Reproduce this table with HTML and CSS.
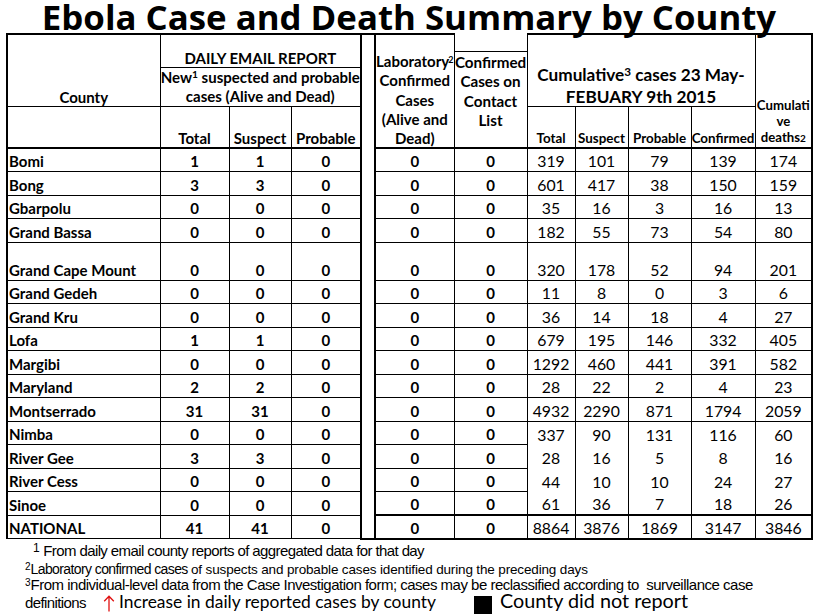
FILE: index.html
```html
<!DOCTYPE html>
<html>
<head>
<meta charset="utf-8">
<title>Ebola Case and Death Summary by County</title>
<link rel="stylesheet" href="styles.css">
</head>
<body>
<h1 class="title">Ebola Case and Death Summary by County</h1>
<table class="summary">
  <colgroup>
    <col class="w-county"><col class="w-total"><col class="w-suspect"><col class="w-probable">
    <col class="w-gap"><col class="w-lab"><col class="w-contact">
    <col class="w-ctotal"><col class="w-csusp"><col class="w-cprob"><col class="w-cconf"><col class="w-deaths">
  </colgroup>
  <tbody>
    <tr class="hrow1">
      <td class="hd county-h first" rowspan="2">County</td>
      <td class="hd daily" colspan="3">DAILY EMAIL REPORT</td>
      <td class="gap" rowspan="19"></td>
      <td class="hd lab" rowspan="3"><div class="lab-in">Laboratory<sup>2</sup><br>Confirmed<br>Cases<br>(Alive and<br>Dead)</div></td>
      <td class="hd contact" rowspan="3"><div class="contact-in">Confirmed<br>Cases on<br>Contact<br>List</div></td>
      <td class="hd cum" colspan="4" rowspan="2"><div class="cum-in">Cumulative<sup>3</sup> cases 23 May-<br>FEBUARY 9th 2015</div></td>
      <td class="hd deaths last" rowspan="3">Cumulati<br>ve<br>deaths<span class="small-sup">2</span></td>
    </tr>
    <tr class="hrow2">
      <td class="hd new" colspan="3">New<sup>1</sup> suspected and probable<br>cases (Alive and Dead)</td>
    </tr>
    <tr class="hrow3">
      <td class="hd first"></td>
      <td class="hd sub">Total</td>
      <td class="hd sub">Suspect</td>
      <td class="hd sub">Probable</td>
      <td class="hd csub">Total</td>
      <td class="hd csub">Suspect</td>
      <td class="hd csub">Probable</td>
      <td class="hd csub">Confirmed</td>
    </tr>
    <tr class="row"><td class="name first">Bomi</td><td class="n">1</td><td class="n">1</td><td class="n">0</td><td class="n lab-c">0</td><td class="n">0</td><td class="c">319</td><td class="c">101</td><td class="c">79</td><td class="c">139</td><td class="c last">174</td></tr>
    <tr class="row"><td class="name first">Bong</td><td class="n">3</td><td class="n">3</td><td class="n">0</td><td class="n lab-c">0</td><td class="n">0</td><td class="c">601</td><td class="c">417</td><td class="c">38</td><td class="c">150</td><td class="c last">159</td></tr>
    <tr class="row"><td class="name first">Gbarpolu</td><td class="n">0</td><td class="n">0</td><td class="n">0</td><td class="n lab-c">0</td><td class="n">0</td><td class="c">35</td><td class="c">16</td><td class="c">3</td><td class="c">16</td><td class="c last">13</td></tr>
    <tr class="row"><td class="name first">Grand Bassa</td><td class="n">0</td><td class="n">0</td><td class="n">0</td><td class="n lab-c">0</td><td class="n">0</td><td class="c">182</td><td class="c">55</td><td class="c">73</td><td class="c">54</td><td class="c last">80</td></tr>
    <tr class="row tall"><td class="name first">Grand Cape Mount</td><td class="n">0</td><td class="n">0</td><td class="n">0</td><td class="n lab-c">0</td><td class="n">0</td><td class="c">320</td><td class="c">178</td><td class="c">52</td><td class="c">94</td><td class="c last">201</td></tr>
    <tr class="row"><td class="name first">Grand Gedeh</td><td class="n">0</td><td class="n">0</td><td class="n">0</td><td class="n lab-c">0</td><td class="n">0</td><td class="c">11</td><td class="c">8</td><td class="c">0</td><td class="c">3</td><td class="c last">6</td></tr>
    <tr class="row"><td class="name first">Grand Kru</td><td class="n">0</td><td class="n">0</td><td class="n">0</td><td class="n lab-c">0</td><td class="n">0</td><td class="c">36</td><td class="c">14</td><td class="c">18</td><td class="c">4</td><td class="c last">27</td></tr>
    <tr class="row"><td class="name first">Lofa</td><td class="n">1</td><td class="n">1</td><td class="n">0</td><td class="n lab-c">0</td><td class="n">0</td><td class="c">679</td><td class="c">195</td><td class="c">146</td><td class="c">332</td><td class="c last">405</td></tr>
    <tr class="row"><td class="name first">Margibi</td><td class="n">0</td><td class="n">0</td><td class="n">0</td><td class="n lab-c">0</td><td class="n">0</td><td class="c">1292</td><td class="c">460</td><td class="c">441</td><td class="c">391</td><td class="c last">582</td></tr>
    <tr class="row"><td class="name first">Maryland</td><td class="n">2</td><td class="n">2</td><td class="n">0</td><td class="n lab-c">0</td><td class="n">0</td><td class="c">28</td><td class="c">22</td><td class="c">2</td><td class="c">4</td><td class="c last">23</td></tr>
    <tr class="row"><td class="name first">Montserrado</td><td class="n">31</td><td class="n">31</td><td class="n">0</td><td class="n lab-c">0</td><td class="n">0</td><td class="c">4932</td><td class="c">2290</td><td class="c">871</td><td class="c">1794</td><td class="c last">2059</td></tr>
    <tr class="row open-bottom"><td class="name first">Nimba</td><td class="n">0</td><td class="n">0</td><td class="n">0</td><td class="n lab-c">0</td><td class="n">0</td><td class="c">337</td><td class="c">90</td><td class="c">131</td><td class="c">116</td><td class="c last">60</td></tr>
    <tr class="row open-top open-bottom"><td class="name first">River Gee</td><td class="n">3</td><td class="n">3</td><td class="n">0</td><td class="n lab-c">0</td><td class="n">0</td><td class="c">28</td><td class="c">16</td><td class="c">5</td><td class="c">8</td><td class="c last">16</td></tr>
    <tr class="row open-top open-bottom"><td class="name first">River Cess</td><td class="n">0</td><td class="n">0</td><td class="n">0</td><td class="n lab-c">0</td><td class="n">0</td><td class="c">44</td><td class="c">10</td><td class="c">10</td><td class="c">24</td><td class="c last">27</td></tr>
    <tr class="row open-top"><td class="name first">Sinoe</td><td class="n">0</td><td class="n">0</td><td class="n">0</td><td class="n lab-c">0</td><td class="n">0</td><td class="c">61</td><td class="c">36</td><td class="c">7</td><td class="c">18</td><td class="c last">26</td></tr>
    <tr class="row national"><td class="name first">NATIONAL</td><td class="n">41</td><td class="n">41</td><td class="n">0</td><td class="n lab-c right">0</td><td class="n right">0</td><td class="c right">8864</td><td class="c right">3876</td><td class="c right">1869</td><td class="c right">3147</td><td class="c right last">3846</td></tr>
  </tbody>
</table>
<div class="notes">
  <p class="note note1"><sup class="fn1">1</sup> From daily email county reports of aggregated data for that day</p>
  <p class="note note2"><sup class="fn">2</sup><span class="lab-note">Laboratory confirmed cases </span><span class="smaller">of suspects and probable cases identified during the preceding days</span></p>
  <p class="note note3"><sup class="fn">3</sup>From individual-level data from the Case Investigation form; cases may be reclassified according to &nbsp;surveillance case</p>
  <p class="note note4"><span class="defs">definitions</span><svg class="arrow" width="12" height="17" viewBox="0 0 12 17" aria-hidden="true"><path d="M6 16.5V1.5M1.2 6.3L6 1.3L10.8 6.3" fill="none" stroke="#e01010" stroke-width="1.3"/></svg><span class="inc">Increase in daily reported cases by county</span><span class="square"></span><span class="noreport">County did not report</span></p>
</div>
</body>
</html>
```

FILE: styles.css
```css
html, body {
  margin: 0;
  padding: 0;
  background: #ffffff;
}

body {
  width: 818px;
  height: 614px;
  overflow: hidden;
  color: #000000;
  font-family: Lato, "Liberation Sans", sans-serif;
}

.title {
  margin: 0;
  height: 33px;
  line-height: 33px;
  font-family: "Open Sans", Lato, sans-serif;
  font-size: 34.8px;
  font-weight: 700;
  text-align: center;
  white-space: nowrap;
}

.summary {
  border-collapse: collapse;
  table-layout: fixed;
  width: 806px;
  margin-left: 6px;
}

.w-county { width: 153px; }
.w-total { width: 69px; }
.w-suspect { width: 62px; }
.w-probable { width: 70px; }
.w-gap { width: 14px; }
.w-lab { width: 79px; }
.w-contact { width: 73px; }
.w-ctotal { width: 48px; }
.w-csusp { width: 53px; }
.w-cprob { width: 63px; }
.w-cconf { width: 64px; }
.w-deaths { width: 57px; }

.summary td {
  border: 1px solid #000;
  padding: 0 2px 1px;
  vertical-align: bottom;
  text-align: center;
  white-space: nowrap;
  overflow: hidden;
}

.summary sup {
  font-size: 0.68em;
  line-height: 0;
  vertical-align: 0.45em;
}

.hrow1 { height: 33px; }
.hrow2 { height: 39px; }
.hrow3 { height: 42px; }
.row { height: 23.5px; }
.row.tall { height: 38px; }

.hd {
  font-weight: 700;
  font-size: 15px;
  line-height: 17px;
}

.summary td.hd { padding-bottom: 0; }

.hrow1 td { border-top-width: 2px; }
.hrow3 td, .summary td.lab, .summary td.contact, .summary td.deaths { border-bottom-width: 2px; }
.summary td.first { border-left-width: 2px; }
.summary td.last { border-right-width: 2px; }

.summary td.new {
  vertical-align: middle;
  line-height: 19px;
  padding: 0;
}

.summary td.gap {
  border: 2px solid #000;
  padding: 0;
}

.summary td.lab {
  padding: 0;
  font-size: 15px;
}

.lab-in {
  line-height: 19.3px;
  margin-bottom: -1.5px;
}

.lab-in sup {
  font-size: 9px;
  margin-left: -1px;
}

.summary td.contact {
  border-top: none;
  vertical-align: top;
  padding: 0;
  font-size: 15.2px;
}

.contact-in {
  margin-top: 17px;
  border-top: 1px solid #000;
  padding-top: 1px;
  line-height: 19.3px;
}

.summary td.cum {
  font-size: 17.2px;
  padding: 0;
}

.cum-in {
  line-height: 22px;
  margin-bottom: -2px;
}

.summary td.csub {
  font-size: 13.4px;
  padding: 0;
}

.summary td.deaths {
  font-size: 13.2px;
  line-height: 16px;
  padding: 0 0 1px;
}

.small-sup {
  font-size: 10px;
}

.name {
  font-weight: 700;
  font-size: 15px;
  line-height: 18px;
}

.summary td.name { text-align: left; padding-left: 1px; }

.n {
  font-weight: 700;
  font-size: 15px;
  line-height: 18px;
}

.c {
  font-size: 15.8px;
  line-height: 18px;
}

.summary td.lab-c { border-left-width: 2px; }

.summary .open-bottom td.c { border-bottom: none; }
.summary .open-top td.c { border-top: none; }

.summary .national td.right {
  border-top-width: 2px;
  border-bottom-width: 2px;
}

.notes {
  padding-left: 25px;
  font-family: "Liberation Sans", Arial, sans-serif;
  white-space: nowrap;
}

.note {
  margin: 0;
  font-size: 15px;
}

.note sup {
  line-height: 0;
}

.note1 {
  height: 20px;
  line-height: 22px;
  padding-left: 8px;
  letter-spacing: -0.6px;
}

.fn1 {
  font-size: 12px;
  vertical-align: 0.35em;
  letter-spacing: 0;
}

.note2 { height: 16px; line-height: 17px; }
.note3 { height: 16px; line-height: 18px; letter-spacing: -0.5px; }

.fn {
  font-size: 10px;
  vertical-align: 0.45em;
  letter-spacing: 0;
}

.lab-note {
  font-size: 14px;
  letter-spacing: -0.6px;
}

.smaller {
  font-size: 13.5px;
  letter-spacing: -0.15px;
}

.note4 {
  display: flex;
  align-items: baseline;
  height: 22px;
  line-height: 17px;
}

.defs {
  font-size: 15px;
  letter-spacing: -0.6px;
}

.arrow {
  align-self: flex-end;
  margin-left: 17px;
  margin-bottom: 2px;
  flex: none;
}

.inc {
  margin-left: 4px;
  font-family: Lato, sans-serif;
  font-size: 17.4px;
  line-height: 17px;
}

.square {
  align-self: flex-end;
  flex: none;
  width: 18px;
  height: 18px;
  background: #000;
  margin-left: 38px;
  margin-right: 8px;
}

.noreport {
  font-family: Lato, sans-serif;
  font-size: 19.8px;
  line-height: 17px;
}
```
